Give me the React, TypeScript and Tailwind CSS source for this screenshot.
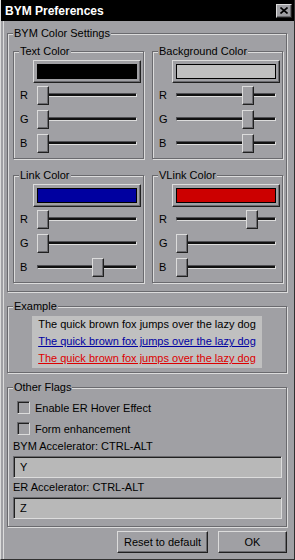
import type { ReactNode } from 'react';

interface GroupBoxProps {
  title: string;
  className?: string;
  children: ReactNode;
}

function GroupBox({ title, className = '', children }: GroupBoxProps) {
  return (
    <fieldset
      className={`border border-[#6a6a6e] shadow-[inset_1px_1px_0_#dcdcdc,1px_1px_0_#dcdcdc] ${className}`}
    >
      <legend className="ml-[5px] px-[1px] bg-[#a0a0a4] leading-[13px]">{title}</legend>
      {children}
    </fieldset>
  );
}

function Slider({ value }: { value: number }) {
  const left = Math.round((value / 255) * 88);
  return (
    <div className="relative w-[100px] h-[19px]">
      <div className="absolute left-0 right-0 top-[7px] h-[4px] bg-[#101010] border-t border-l border-t-[#505054] border-l-[#505054] border-b border-r border-b-[#dcdcdc] border-r-[#dcdcdc]" />
      <div
        className="absolute top-0 w-[12px] h-[19px] bg-[#a0a0a4] border border-t-[#dcdcdc] border-l-[#dcdcdc] border-r-[#202020] border-b-[#202020] shadow-[inset_-1px_-1px_0_#6a6a6e]"
        style={{ left }}
      />
    </div>
  );
}

interface ColorGroupProps {
  title: string;
  swatch: string;
  rgb: [number, number, number];
}

function ColorGroup({ title, swatch, rgb }: ColorGroupProps) {
  const labels = ['R', 'G', 'B'];
  return (
    <GroupBox title={title} className="w-[131px]">
      <div className="pt-[2px] pb-[5px] flex flex-col">
        <div className="ml-[19px] w-[108px] h-[23px] p-[3px] bg-[#a0a0a4] border border-t-[#dcdcdc] border-l-[#dcdcdc] border-r-[#202020] border-b-[#202020] shadow-[inset_-1px_-1px_0_#6a6a6e]">
          <div className="w-full h-full border border-black" style={{ backgroundColor: swatch }} />
        </div>
        {labels.map((l, i) => (
          <div key={l} className={`flex items-center h-[19px] pl-[6px] ${i === 0 ? 'mt-[3px]' : 'mt-[5px]'}`}>
            <span className="w-[17px] leading-[13px]">{l}</span>
            <Slider value={rgb[i]} />
          </div>
        ))}
      </div>
    </GroupBox>
  );
}

function Checkbox({ label }: { label: string }) {
  return (
    <div className="flex items-center h-[21px] pl-[4px]">
      <div className="w-[13px] h-[13px] bg-[#a0a0a4] border border-t-[#6a6a6e] border-l-[#6a6a6e] border-r-[#dcdcdc] border-b-[#dcdcdc] shadow-[inset_1px_1px_0_#202020]" />
      <span className="ml-[5px] leading-[14px]">{label}</span>
    </div>
  );
}

function TextInput({ value }: { value: string }) {
  return (
    <div className="w-[269px] h-[22px] bg-[#b8b8b8] border border-t-[#6a6a6e] border-l-[#6a6a6e] border-r-[#dcdcdc] border-b-[#dcdcdc] shadow-[inset_1px_1px_0_#202020] flex items-center pl-[6px]">
      {value}
    </div>
  );
}

function Button({ label, width }: { label: string; width: string }) {
  return (
    <button
      className={`${width} h-[22px] bg-[#a0a0a4] border border-t-[#dcdcdc] border-l-[#dcdcdc] border-r-[#202020] border-b-[#202020] shadow-[inset_-1px_-1px_0_#6a6a6e] text-[11px] leading-[13px]`}
    >
      {label}
    </button>
  );
}

export default function App() {
  return (
    <div className="w-[295px] h-[560px] overflow-hidden bg-[#a0a0a4] font-['Liberation_Sans',Arial,sans-serif] text-[11px] text-black border-l border-l-[#dcdcdc] border-r border-r-[#303030] border-b border-b-[#303030] shadow-[inset_2px_0_0_#a0a0a4,inset_3px_0_0_#dcdcdc] flex flex-col">
      {/* title bar */}
      <div className="h-[21px] shrink-0 bg-black flex items-center justify-between pl-[4px] pr-[2px]">
        <span className="text-white font-bold text-[12px] leading-[14px]">BYM Preferences</span>
        <div className="w-[16px] h-[14px] bg-[#a0a0a4] border border-t-[#dcdcdc] border-l-[#dcdcdc] border-r-[#202020] border-b-[#202020] shadow-[inset_-1px_-1px_0_#6a6a6e] flex items-center justify-center">
          <svg width="8" height="7" viewBox="0 0 8 7">
            <path d="M0.5 0.5 L7.5 6.5 M7.5 0.5 L0.5 6.5" stroke="#000" strokeWidth="1.6" />
          </svg>
        </div>
      </div>

      <div className="pl-[6px] pt-[6px] flex flex-col">
        <GroupBox title="BYM Color Settings" className="w-[280px]">
          <div className="pl-[5px] pt-[5px] pb-[8px] grid grid-cols-[131px_131px] gap-x-[8px] gap-y-[10px]">
            <ColorGroup title="Text Color" swatch="#000000" rgb={[0, 0, 0]} />
            <ColorGroup title="Background Color" swatch="#c0c0c0" rgb={[192, 192, 192]} />
            <ColorGroup title="Link Color" swatch="#0000a0" rgb={[0, 0, 160]} />
            <ColorGroup title="VLink Color" swatch="#cc0000" rgb={[204, 0, 0]} />
          </div>
        </GroupBox>

        <GroupBox title="Example" className="w-[280px] mt-[8px]">
          <div className="pt-[3px] pb-[4px] flex justify-center">
            <div className="bg-[#c0c0c0] px-[6px] pb-[1px] leading-[17px]">
              <div>The quick brown fox jumps over the lazy dog</div>
              <div className="text-[#0000a0] underline">The quick brown fox jumps over the lazy dog</div>
              <div className="text-[#dd0000] underline">The quick brown fox jumps over the lazy dog</div>
            </div>
          </div>
        </GroupBox>

        <GroupBox title="Other Flags" className="w-[280px] mt-[8px]">
          <div className="pl-[5px] pt-[3px] pb-[7px] flex flex-col">
            <Checkbox label="Enable ER Hover Effect" />
            <Checkbox label="Form enhancement" />
            <div className="leading-[14px]">BYM Accelerator: CTRL-ALT</div>
            <div className="mt-[3px]">
              <TextInput value="Y" />
            </div>
            <div className="leading-[14px] mt-[2px]">ER Accelerator: CTRL-ALT</div>
            <div className="mt-[3px]">
              <TextInput value="Z" />
            </div>
          </div>
        </GroupBox>
      </div>

      <div className="flex justify-end gap-[10px] pr-[7px] mt-[4px]">
        <Button label="Reset to default" width="w-[91px]" />
        <Button label="OK" width="w-[69px]" />
      </div>
    </div>
  );
}
